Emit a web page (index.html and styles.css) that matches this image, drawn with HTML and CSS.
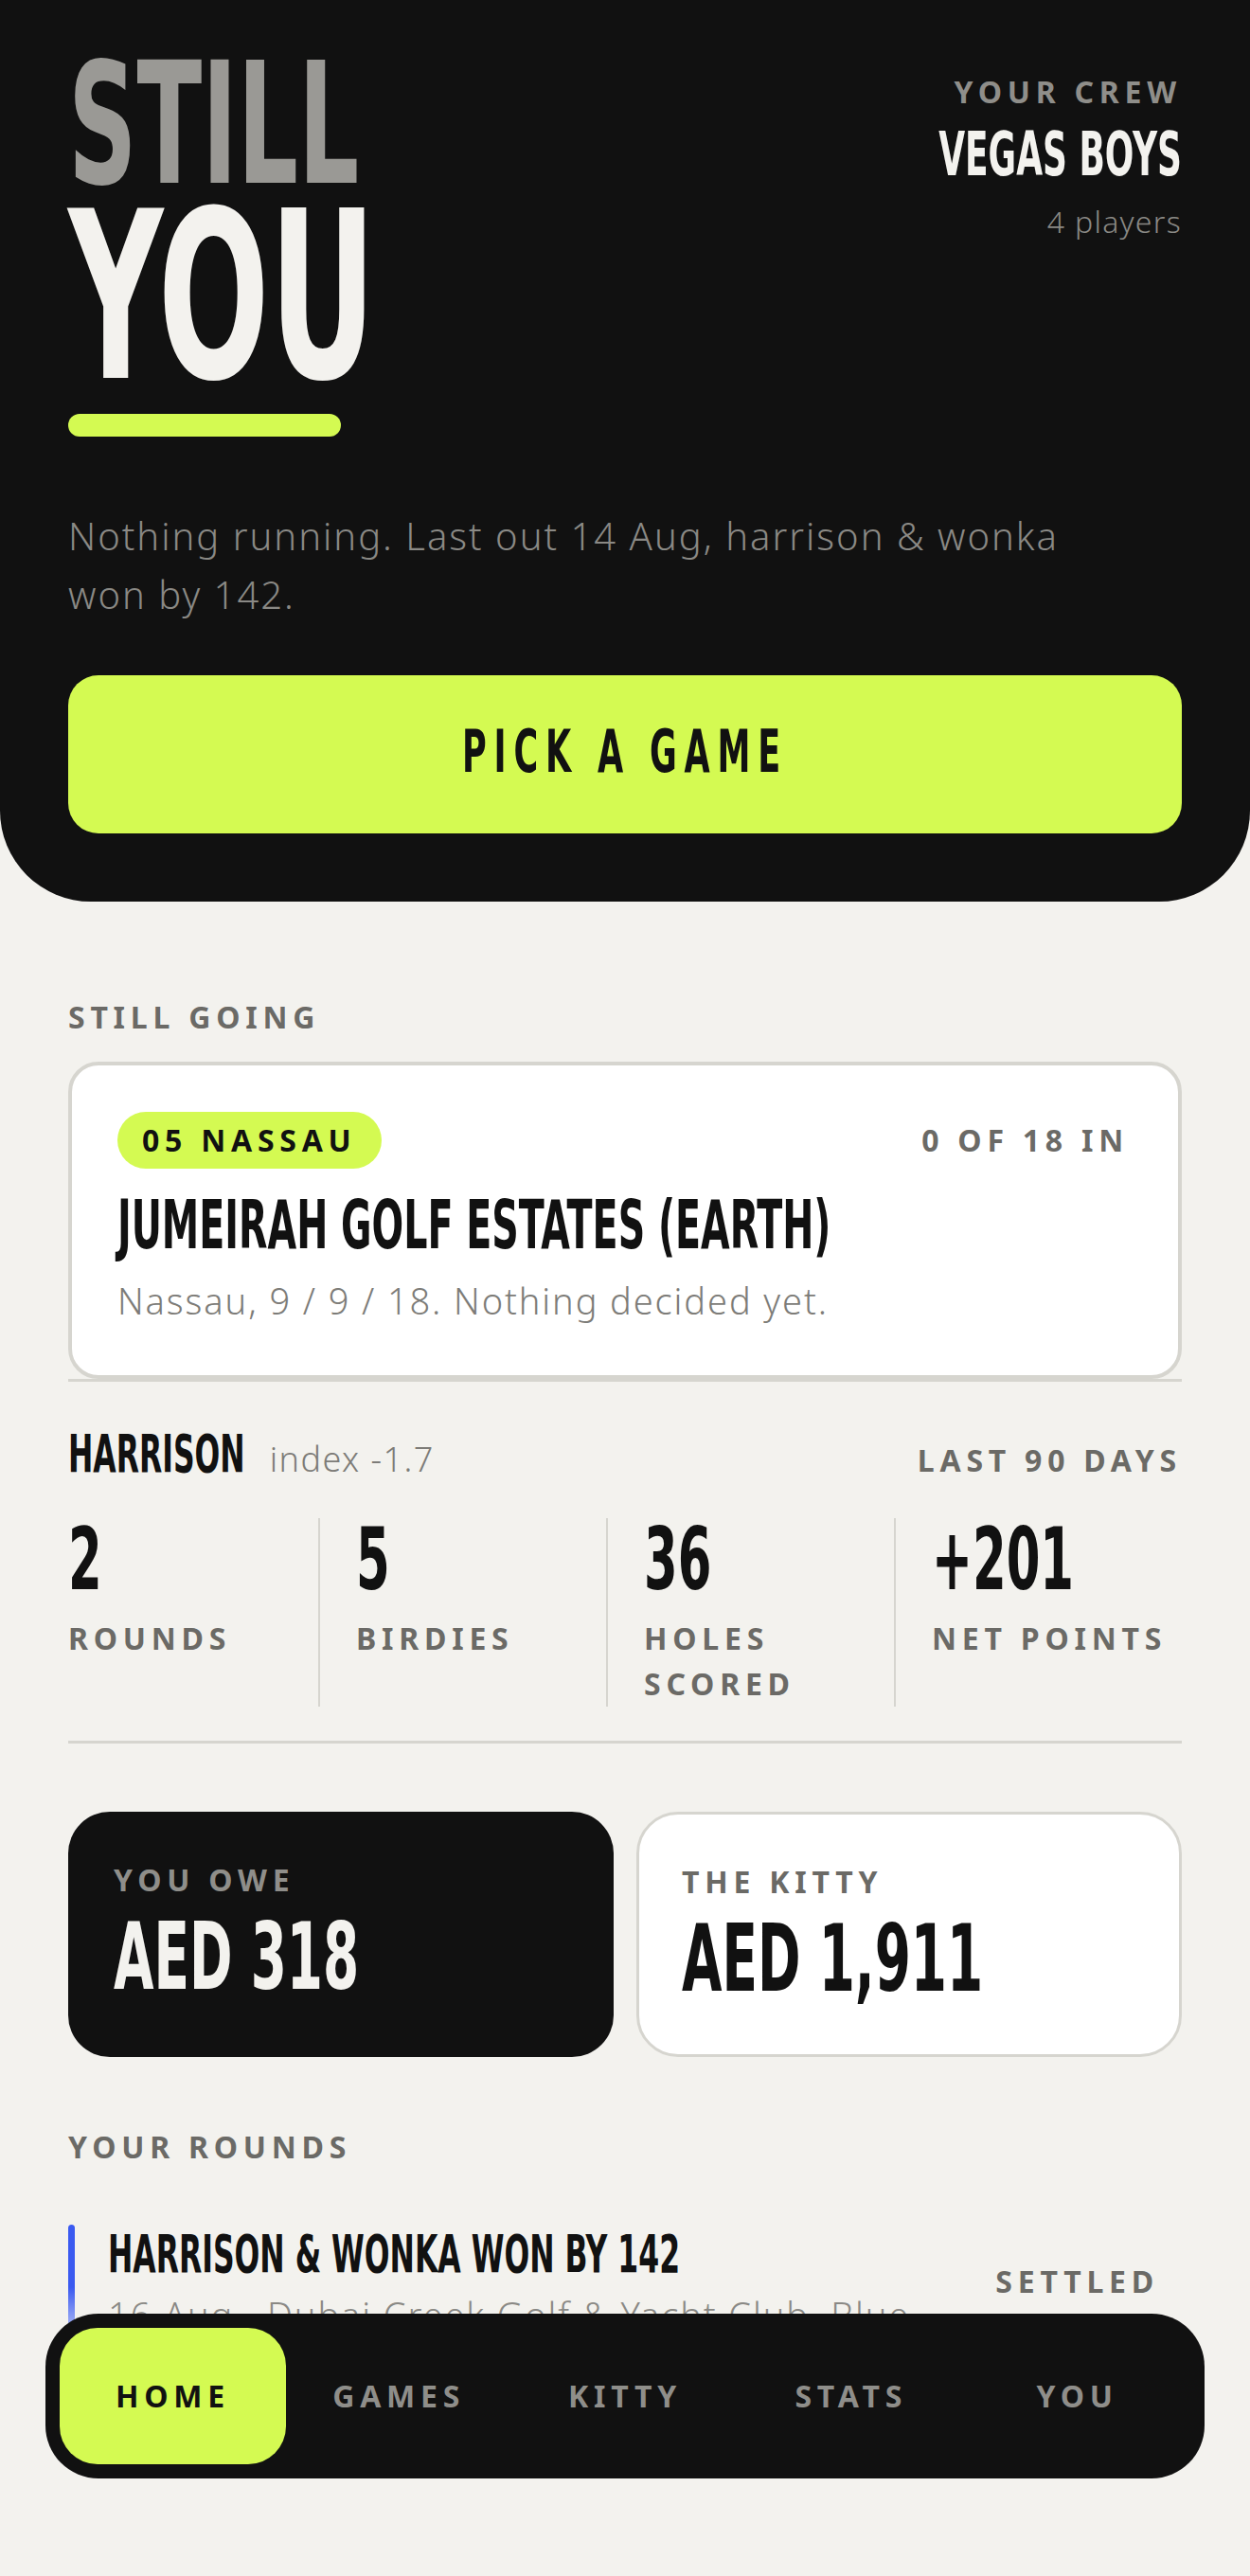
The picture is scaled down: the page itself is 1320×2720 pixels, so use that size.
FILE: index.html
```html
<!DOCTYPE html>
<html lang="en">
<head>
    <meta charset="UTF-8">
    <meta name="viewport" content="width=device-width, initial-scale=1.0">
    <title>Still You</title>
    <link rel="stylesheet" href="styles.css">
</head>
<body>

<header class="hero">
    <div class="hero-top">
        <div class="hero-title">
            <h1><span class="title-still">Still</span><span class="title-you">You</span></h1>
            <div class="title-bar"></div>
        </div>
        <div class="crew">
            <div class="label">Your crew</div>
            <div class="crew-name">Vegas Boys</div>
            <div class="crew-count">4 players</div>
        </div>
    </div>
    <p class="hero-note">Nothing running. Last out 14 Aug, harrison &amp; wonka won by 142.</p>
    <button class="cta"><span>Pick a game</span></button>
</header>

<main class="content">
    <h2 class="label section-label">Still going</h2>
    <div class="game-card">
        <div class="game-top">
            <span class="label badge">05 Nassau</span>
            <span class="label">0 of 18 in</span>
        </div>
        <h3 class="game-title">Jumeirah Golf Estates (Earth)</h3>
        <p class="game-note">Nassau, 9 / 9 / 18. Nothing decided yet.</p>
    </div>

    <section class="stats">
        <div class="stats-head">
            <span class="player-name">Harrison</span>
            <span class="player-index">index -1.7</span>
            <span class="label stats-range">Last 90 days</span>
        </div>
        <div class="stats-row">
            <div class="stat">
                <div class="stat-value">2</div>
                <div class="label stat-label">Rounds</div>
            </div>
            <div class="stat">
                <div class="stat-value">5</div>
                <div class="label stat-label">Birdies</div>
            </div>
            <div class="stat">
                <div class="stat-value">36</div>
                <div class="label stat-label">Holes scored</div>
            </div>
            <div class="stat">
                <div class="stat-value">+201</div>
                <div class="label stat-label">Net points</div>
            </div>
        </div>
    </section>

    <div class="money">
        <div class="money-card money-owe">
            <div class="label">You owe</div>
            <div class="money-value">AED 318</div>
        </div>
        <div class="money-card money-kitty">
            <div class="label">The kitty</div>
            <div class="money-value">AED 1,911</div>
        </div>
    </div>

    <h2 class="label section-label rounds-label">Your rounds</h2>
    <div class="round">
        <div class="round-bar"></div>
        <div class="round-main">
            <div class="round-title">Harrison &amp; Wonka won by 142</div>
            <div class="round-note">16 Aug · Dubai Creek Golf &amp; Yacht Club, Blue</div>
        </div>
        <span class="label round-status">Settled</span>
    </div>
</main>

<nav class="tabbar">
    <a href="#" class="label tab active">Home</a>
    <a href="#" class="label tab">Games</a>
    <a href="#" class="label tab">Kitty</a>
    <a href="#" class="label tab">Stats</a>
    <a href="#" class="label tab">You</a>
</nav>

</body>
</html>
```

FILE: styles.css
```css
body {
    margin: 0;
    background: #f3f2ee;
    font-family: "Noto Sans", "DejaVu Sans", sans-serif;
    color: #111;
}

/* tall poster type: condensed bold, stretched up from the baseline */
.title-still, .title-you, .crew-name, .cta span, .game-title, .player-name,
.stat-value, .money-value, .round-title {
    font-family: "DejaVu Sans Condensed", "DejaVu Sans", sans-serif;
    font-weight: 700;
    line-height: 0.8;
    text-transform: uppercase;
    white-space: nowrap;
    transform: scaleY(1.6);
    transform-origin: 50% 93.25%;
}

.label {
    font-size: 32px;
    line-height: 36px;
    font-weight: 700;
    letter-spacing: 0.18em;
    text-transform: uppercase;
    color: #6b6a66;
}

/* hero */
.hero {
    background: #111;
    border-radius: 0 0 96px 96px;
    padding: 50px 72px 72px;
}
.hero-top {
    display: flex;
    justify-content: space-between;
    align-items: flex-start;
}
.hero-title {
    padding-top: 60px;
}
.hero-title h1 {
    margin: 0;
    font-size: inherit;
}
.title-still {
    display: block;
    font-size: 112px;
    color: #9a9995;
}
.title-you {
    display: block;
    margin-top: 84px;
    font-size: 154px;
    color: #f3f2ee;
}
.title-bar {
    width: 288px;
    height: 24px;
    margin-top: 30px;
    border-radius: 12px;
    background: #d4fa52;
}
.crew {
    padding-top: 29px;
    text-align: right;
}
.crew .label {
    color: #8f8e8a;
}
.crew-name {
    margin-top: 40px;
    font-size: 40px;
    color: #f3f2ee;
}
.crew-count {
    margin-top: 24px;
    font-size: 32px;
    line-height: 45px;
    font-weight: 300;
    letter-spacing: 0.04em;
    color: #8a8985;
}
.hero-note {
    margin: 74px 0 0;
    max-width: 1080px;
    font-size: 40px;
    line-height: 62px;
    font-weight: 300;
    letter-spacing: 0.05em;
    color: #8a8985;
}
.cta {
    display: block;
    width: 100%;
    height: 167px;
    margin-top: 54px;
    padding: 11px 0 0;
    border: none;
    border-radius: 32px;
    background: #d4fa52;
    color: #111;
    cursor: pointer;
}
.cta span {
    display: inline-block;
    font-size: 39px;
    letter-spacing: 0.2em;
}

/* main column */
.content {
    padding: 104px 72px 240px;
}
.section-label {
    margin: 0;
}
.game-card {
    margin-top: 29px;
    padding: 49px 52px 54px 48px;
    border: 4px solid #d6d5cf;
    border-radius: 32px;
    background: #fff;
}
.game-top {
    display: flex;
    justify-content: space-between;
    align-items: center;
}
.badge {
    padding: 12px 26px;
    border-radius: 30px;
    background: #d4fa52;
    color: #111;
}
.game-title {
    margin: 51px 0 0;
    font-size: 44px;
}
.game-note {
    margin: 28px 0 0;
    font-size: 38px;
    line-height: 50px;
    font-weight: 300;
    letter-spacing: 0.05em;
    color: #7d7c78;
}

.stats {
    padding: 62px 0 36px;
    border-top: 3px solid #d6d5cf;
    border-bottom: 3px solid #d6d5cf;
}
.stats-head {
    display: flex;
    align-items: baseline;
    gap: 26px;
}
.player-name {
    display: inline-block;
    font-size: 35px;
}
.player-index {
    font-size: 36px;
    line-height: 40px;
    font-weight: 300;
    letter-spacing: 0.04em;
    color: #7d7c78;
}
.stats-range {
    margin-left: auto;
}
.stats-row {
    display: flex;
    margin-top: 42px;
}
.stat {
    flex: 1;
    padding-left: 38px;
    border-left: 2px solid #d6d5cf;
}
.stat:first-child {
    padding-left: 0;
    border-left: none;
}
.stat-value {
    margin-top: 33px;
    font-size: 57px;
}
.stat-label {
    margin-top: 24px;
    line-height: 48px;
}

.money {
    display: grid;
    grid-template-columns: 1fr 1fr;
    gap: 24px;
    margin-top: 72px;
}
.money-card {
    padding: 54px 48px 69px;
    border-radius: 44px;
}
.money-owe {
    background: #111;
}
.money-owe .label {
    color: #8f8e8a;
}
.money-owe .money-value {
    color: #f3f2ee;
}
.money-kitty {
    padding: 53px 45px 64px;
    border: 3px solid #d6d5cf;
    background: #fff;
}
.money-value {
    margin-top: 52px;
    font-size: 61px;
}

.rounds-label {
    margin-top: 77px;
}
.round {
    display: flex;
    align-items: center;
    margin-top: 64px;
    padding-right: 24px;
}
.round-bar {
    align-self: stretch;
    width: 7px;
    margin-right: 35px;
    border-radius: 4px;
    background: linear-gradient(#3a5af0 55%, #c3ccf6);
}
.round-main {
    flex: 1;
}
.round-title {
    margin-top: 24px;
    font-size: 35px;
}
.round-note {
    margin-top: 18px;
    font-size: 38px;
    line-height: 50px;
    font-weight: 300;
    letter-spacing: 0.05em;
    color: #8a8985;
}

/* bottom tab bar */
.tabbar {
    position: fixed;
    left: 48px;
    right: 48px;
    bottom: 103px;
    display: flex;
    padding: 15px;
    border-radius: 56px;
    background: #111;
}
.tab {
    flex: 1;
    height: 144px;
    display: flex;
    align-items: center;
    justify-content: center;
    border-radius: 40px;
    color: #8f8e8a;
    text-decoration: none;
}
.tab.active {
    background: #d4fa52;
    color: #111;
}
```
